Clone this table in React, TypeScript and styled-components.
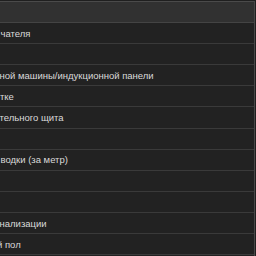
import React from "react";
import styled, { createGlobalStyle } from "styled-components";

const GlobalStyle = createGlobalStyle`
  html, body {
    margin: 0;
    padding: 0;
    background: #1e1e1e;
    overflow: hidden;
  }
`;

const Viewport = styled.div`
  width: 256px;
  height: 256px;
  padding-top: 1px;
  box-sizing: border-box;
  background: #1f1f1f;
  overflow: hidden;
`;

const Table = styled.div`
  width: 254px;
  border-top: 1px solid #4a4a4a;
  border-right: 1px solid #484848;
  font-family: "Liberation Sans", Arial, sans-serif;
  font-size: 9.5px;
  color: #dadada;
`;

const HeaderRow = styled.div`
  height: 20px;
  background: #313131;
  border-bottom: 1px solid #444444;
`;

const Row = styled.div`
  display: flex;
  align-items: center;
  height: 20.12px;
  background: #222222;
  border-bottom: 1px solid #3a3a3a;
  overflow: hidden;
`;

const Cell = styled.span<{ $shift: number }>`
  white-space: nowrap;
  margin-left: ${(p) => p.$shift}px;
  line-height: 20px;
  padding-top: 1px;
`;

const rows: { text: string; shift: number }[] = [
  { text: "чателя", shift: 0.5 },
  { text: "", shift: 0 },
  { text: "ной машины/индукционной панели", shift: -0.5 },
  { text: "тке", shift: 0 },
  { text: "тельного щита", shift: -0.5 },
  { text: "", shift: 0 },
  { text: "водки (за метр)", shift: 0.5 },
  { text: "", shift: 0 },
  { text: "", shift: 0 },
  { text: "нализации", shift: -0.5 },
  { text: "й пол", shift: -3 },
  { text: "", shift: 0 },
];

export default function App() {
  return (
    <Viewport>
      <GlobalStyle />
      <Table>
        <HeaderRow />
        {rows.map((r, i) => (
          <Row key={i}>
            <Cell $shift={r.shift}>{r.text}</Cell>
          </Row>
        ))}
      </Table>
    </Viewport>
  );
}
